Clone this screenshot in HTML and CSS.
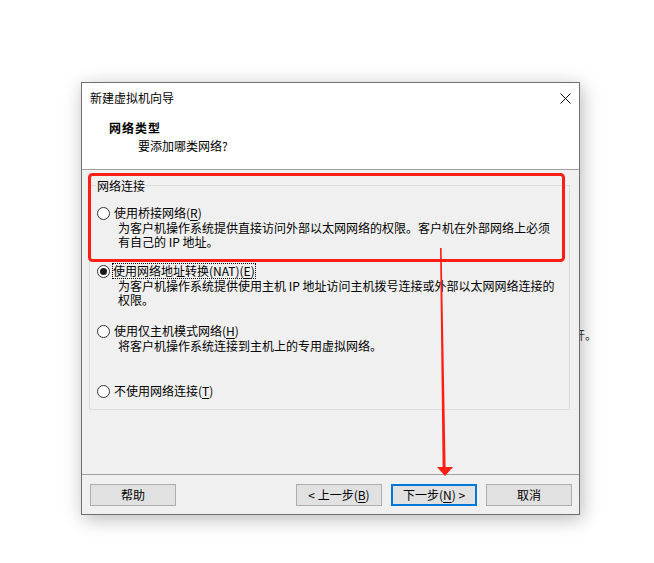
FILE: index.html
```html
<!DOCTYPE html>
<html lang="zh-CN">
<head>
<meta charset="utf-8">
<title>新建虚拟机向导</title>
<link rel="stylesheet" href="styles.css">
</head>
<body>
<div class="behind">开。</div>
<div class="window">
  <div class="head">
    <div class="titlebar">
      <span class="title">新建虚拟机向导</span>
      <svg class="close" width="11" height="11" viewBox="0 0 11 11"><path d="M0.5 0.5 L10.5 10.5 M10.5 0.5 L0.5 10.5" stroke="#000" stroke-width="1" fill="none"/></svg>
    </div>
    <div class="htitle">网络类型</div>
    <div class="hsub">要添加哪类网络?</div>
  </div>
  <div class="body">
    <div class="group">
      <span class="legend">网络连接</span>
      <div class="opt">
        <span class="radio"></span>
        <span class="lbl">使用桥接网络(<u>R</u>)</span>
      </div>
      <div class="desc">为客户机操作系统提供直接访问外部以太网网络的权限。客户机在外部网络上必须<br>有自己的 IP 地址。</div>
      <div class="opt opt2">
        <span class="radio checked"></span>
        <span class="lbl focus">使用网络地址转换(NAT)(<u>E</u>)</span>
      </div>
      <div class="desc">为客户机操作系统提供使用主机 IP 地址访问主机拨号连接或外部以太网网络连接的<br>权限。</div>
      <div class="opt opt3">
        <span class="radio"></span>
        <span class="lbl">使用仅主机模式网络(<u>H</u>)</span>
      </div>
      <div class="desc">将客户机操作系统连接到主机上的专用虚拟网络。</div>
      <div class="opt opt4">
        <span class="radio"></span>
        <span class="lbl">不使用网络连接(<u>T</u>)</span>
      </div>
    </div>
  </div>
  <div class="footer">
    <button class="btn">帮助</button>
    <span class="spacer"></span>
    <button class="btn">&lt; 上一步(<u>B</u>)</button>
    <button class="btn primary">下一步(<u>N</u>) &gt;</button>
    <button class="btn">取消</button>
  </div>
</div>
<svg class="annot" width="654" height="563" viewBox="0 0 654 563">
  <rect x="89.5" y="174.5" width="474" height="86" rx="3" ry="3" fill="none" stroke="#ff1e14" stroke-width="3"/>
  <polygon points="440,248 441.6,248 445.6,467 453,467 445,476 437,467 442.6,467" fill="#ff1e14"/>
</svg>
</body>
</html>
```
FILE: styles.css
```css
* { box-sizing: border-box; }
html, body {
  margin: 0;
  padding: 0;
}
body {
  width: 654px;
  height: 563px;
  overflow: hidden;
  position: relative;
  background: #ffffff;
  font-family: "Noto Sans CJK SC", "Liberation Sans", sans-serif;
  font-size: 12px;
  color: #000;
}
u { text-underline-offset: 2px; }

.behind {
  position: absolute;
  left: 573px;
  top: 328px;
  line-height: 14px;
  color: #333;
  z-index: 0;
}

.window {
  position: absolute;
  left: 81px;
  top: 82px;
  width: 499px;
  height: 433px;
  border: 1px solid #6f6f6f;
  background: #f0f0f0;
  display: flex;
  flex-direction: column;
  box-shadow: 2px 4px 18px rgba(0, 0, 0, 0.28);
  z-index: 1;
}

.head {
  height: 87px;
  flex: none;
  background: #fff;
  border-bottom: 1px solid #a0a0a0;
}
.titlebar {
  height: 30px;
  display: flex;
  align-items: center;
  padding-left: 8px;
  padding-right: 8px;
}
.title {
  flex: 1;
  line-height: 14px;
}
.close { display: block; }
.htitle {
  margin-top: 6px;
  padding-left: 27px;
  line-height: 18px;
  font-weight: bold;
  letter-spacing: 1px;
}
.hsub {
  padding-left: 56px;
  line-height: 18px;
}

.body {
  flex: 1;
  padding: 15px 9px 0 7px;
}
.group {
  position: relative;
  border: 1px solid #dcdcdc;
  padding: 20px 0 11px 7px;
}
.legend {
  position: absolute;
  left: 6px;
  top: -7px;
  padding: 0 1px;
  line-height: 14px;
  background: #f0f0f0;
}
.opt {
  display: flex;
  align-items: center;
  height: 14px;
  gap: 4px;
}
.opt2 { margin-top: 15px; }
.opt3 { margin-top: 17px; }
.opt4 { margin-top: 31px; }
.radio {
  width: 13px;
  height: 13px;
  border: 1px solid #333;
  border-radius: 50%;
  background: #fff;
  display: flex;
  align-items: center;
  justify-content: center;
  flex: none;
}
.radio.checked::after {
  content: "";
  width: 7px;
  height: 7px;
  border-radius: 50%;
  background: #1a1a1a;
}
.lbl {
  line-height: 14px;
  white-space: nowrap;
}
.lbl.focus {
  outline: 1px dotted #000;
  outline-offset: 0;
  margin-left: -1px;
}
.desc {
  margin-top: 1px;
  padding-left: 21px;
  line-height: 14px;
  white-space: nowrap;
}

.footer {
  height: 40px;
  flex: none;
  border-top: 1px solid #a0a0a0;
  display: flex;
  align-items: flex-start;
  padding: 9px 7px 0 8px;
  gap: 9px;
}
.spacer { flex: 1; }
.btn {
  width: 86px;
  height: 22px;
  padding: 0;
  border: 1px solid #adadad;
  background: #e1e1e1;
  font-family: "Noto Sans CJK SC", "Liberation Sans", sans-serif;
  font-size: 12px;
  line-height: 14px;
  color: #000;
}
.btn.primary {
  border: 2px solid #0078d7;
}

.annot {
  position: absolute;
  left: 0;
  top: 0;
  z-index: 2;
  pointer-events: none;
}
```
